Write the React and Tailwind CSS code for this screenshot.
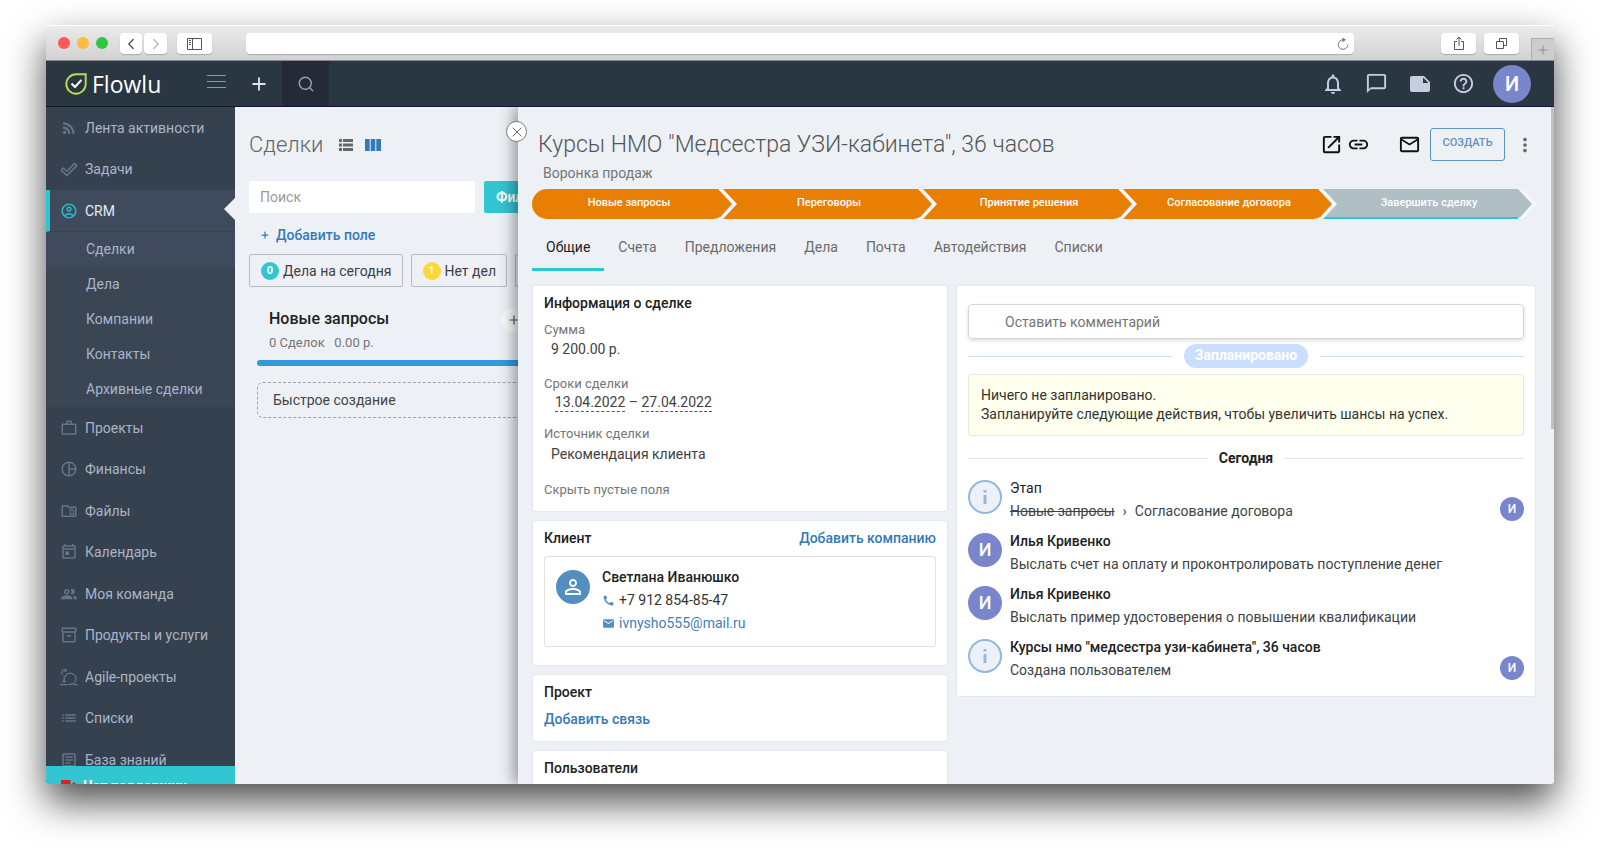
import {
  MdRssFeed,
  MdOutlineAccountCircle,
  MdWorkOutline,
  MdPieChartOutline,
  MdOutlineSnippetFolder,
  MdOutlineToday,
  MdOutlineInventory2,
  MdList,
  MdOutlineArticle,
  MdNotificationsNone,
  MdOutlineChatBubbleOutline,
  MdNote,
  MdHelpOutline,
  MdOpenInNew,
  MdLink,
  MdMailOutline,
  MdMoreVert,
  MdCall,
  MdEmail,
  MdPersonOutline,
} from 'react-icons/md';
import { ChevronLeft, ChevronRight, Plus, Search, X } from 'lucide-react';
import { clsx } from 'clsx';

const DoubleCheckIcon = ({ className }) => (
  <svg viewBox="0 0 18 18" className={className} fill="none" stroke="currentColor" strokeWidth="1.5" strokeLinejoin="round">
    <path d="M1.2 10.2 L3.4 8 L6.8 11.2 L14.6 3.4 L16.8 5.6 L6.8 15.6 Z" />
  </svg>
);

const TeamIcon = ({ className }) => (
  <svg viewBox="0 0 24 24" className={className} fill="none" stroke="currentColor" strokeWidth="2">
    <circle cx="9" cy="9" r="2.7" />
    <path d="M14.5 5.5a3.7 3.7 0 1 1 0 6.6q1.6-3.2 0-6.6Z" fill="currentColor" stroke="none" />
    <path d="M1.5 19v-1.5c0-2.6 5-4 7.5-4s7.5 1.4 7.5 4V19Z" fill="currentColor" stroke="none" />
    <path d="M17 13.8c2.6.5 5.5 1.8 5.5 3.7V19H18.5v-1.6c0-1.5-.6-2.7-1.5-3.6Z" fill="currentColor" stroke="none" />
  </svg>
);

const AgileIcon = ({ className }) => (
  <svg viewBox="0 0 18 18" className={className} fill="none" stroke="currentColor" strokeWidth="1.3">
    <path d="M0 16.6h7.5M13.5 16.6h4.5" />
    <path d="M8 16.4h2.2a5.6 5.6 0 1 0-5.2-7.4" />
    <path d="M4.2 8v6.2M2.8 12.7l1.4 1.6 1.4-1.6" />
    <path d="M2.6 6.4A2.4 2.4 0 0 1 3.2 2.2H6M4.8 0.7L6.4 2.3L4.8 3.9" />
  </svg>
);

const menuItems = [
  { icon: MdWorkOutline, label: 'Проекты' },
  { icon: MdPieChartOutline, label: 'Финансы' },
  { icon: MdOutlineSnippetFolder, label: 'Файлы' },
  { icon: MdOutlineToday, label: 'Календарь' },
  { icon: TeamIcon, label: 'Моя команда' },
  { icon: MdOutlineInventory2, label: 'Продукты и услуги' },
  { icon: AgileIcon, label: 'Agile-проекты' },
  { icon: MdList, label: 'Списки' },
  { icon: MdOutlineArticle, label: 'База знаний' },
];

const crmItems = ['Сделки', 'Дела', 'Компании', 'Контакты', 'Архивные сделки'];

const stages = [
  { label: 'Новые запросы', done: true },
  { label: 'Переговоры', done: true },
  { label: 'Принятие решения', done: true },
  { label: 'Согласование договора', done: true },
  { label: 'Завершить сделку', done: false },
];

const tabs = ['Общие', 'Счета', 'Предложения', 'Дела', 'Почта', 'Автодействия', 'Списки'];

function BrowserBar() {
  const button = 'flex h-[21px] items-center justify-center rounded bg-white text-[#555] shadow-[0_1px_1px_rgba(0,0,0,0.2)]';
  return (
    <div className="flex h-9 shrink-0 items-start rounded-t border-t border-white border-b border-b-[#8a8a8a] bg-linear-to-b from-[#ebebeb] to-[#d2d2d2] pt-[7px] pl-3">
      <div className="flex h-5 items-center gap-[7px]">
        <span className="size-3 rounded-full bg-[#fc5b57]" />
        <span className="size-3 rounded-full bg-[#fdbc40]" />
        <span className="size-3 rounded-full bg-[#2fc840]" />
      </div>
      <button aria-label="Назад" className={clsx(button, 'ml-3 w-[22px]')}>
        <ChevronLeft className="size-[18px]" strokeWidth={1.8} />
      </button>
      <button aria-label="Вперёд" className={clsx(button, 'ml-0.5 w-[23px]')}>
        <ChevronRight className="size-[18px] text-[#bbb]" strokeWidth={1.8} />
      </button>
      <button aria-label="Боковая панель" className={clsx(button, 'ml-2.5 w-[35px]')}>
        <svg viewBox="0 0 15 12" className="h-3 w-[15px]" fill="none" stroke="currentColor">
          <path d="M0.5 0.5h14v11h-14zM5.5 0.5v11M2 2.5h2M2 4.5h2M2 6.5h2" />
        </svg>
      </button>
      <div className="ml-[34px] flex h-[21px] flex-1 items-center rounded bg-white pr-1 shadow-[0_1px_1px_rgba(0,0,0,0.2)]">
        <input aria-label="Адрес" className="h-full min-w-0 flex-1 bg-transparent px-2 text-xs outline-none" />
        <button aria-label="Обновить" className="text-[#777]">
          <svg viewBox="0 0 14 14" className="size-3.5" fill="none" stroke="currentColor" strokeWidth="1">
            <path d="M7 2.8A4.8 4.8 0 1 0 11.8 7.6" />
            <path d="M6.5 0.4 L10 2.8 L6.5 5.2Z" fill="currentColor" stroke="none" />
          </svg>
        </button>
      </div>
      <button aria-label="Поделиться" className={clsx(button, 'ml-[87px] w-[35px]')}>
        <svg viewBox="0 0 12 15" className="h-[15px] w-3" fill="none" stroke="currentColor">
          <path d="M4 5.5H1.5v8h9v-8H8M6 10V1M3.5 3.5 L6 1 L8.5 3.5" />
        </svg>
      </button>
      <button aria-label="Вкладки" className={clsx(button, 'ml-2 w-[35px]')}>
        <svg viewBox="0 0 13 13" className="size-[13px]" fill="none" stroke="currentColor">
          <path d="M1.5 4.5h7v7h-7zM4.5 4.5v-3h7v7h-3" />
        </svg>
      </button>
      <button aria-label="Новая вкладка" className="mt-[5px] ml-3 flex h-[22px] w-[23px] items-center justify-center border border-r-0 border-b-0 border-[#b0b0b0] bg-[#cdcdcd] text-[#888]">
        <Plus className="size-3.5" strokeWidth={1.5} />
      </button>
    </div>
  );
}

function Header() {
  return (
    <header className="flex h-[46px] shrink-0 items-center border-b border-[#0c1830] bg-[#2b3643] text-[#c5cde0]">
      <div className="flex w-[189px] items-center pl-[19px]">
        <svg viewBox="0 0 22 22" className="size-[22px]" fill="none">
          <path d="M11 1.3H20.7V11A9.7 9.7 0 1 1 11 1.3Z" stroke="#b4e04f" strokeWidth="1.9" />
          <path d="M6.5 10.5 L10 14 L16.5 6.8" stroke="#fff" strokeWidth="2" />
        </svg>
        <span className="ml-[5px] font-['Open_Sans',sans-serif] text-[23px] leading-6 font-medium text-white">Flowlu</span>
        <button aria-label="Меню" className="mb-1 ml-auto mr-[9px] flex flex-col gap-[5px]">
          <span className="h-px w-[19px] bg-[#8b95a5]" />
          <span className="h-px w-[19px] bg-[#8b95a5]" />
          <span className="h-px w-[19px] bg-[#8b95a5]" />
        </button>
      </div>
      <button aria-label="Добавить" className="flex h-full w-[47px] items-center justify-center text-[#dfe4ee]">
        <Plus className="size-5" strokeWidth={2.2} />
      </button>
      <button aria-label="Поиск" className="flex h-full w-[47px] items-center justify-center bg-[#242b36] text-[#98a0ae]">
        <Search className="size-[18px]" strokeWidth={1.9} />
      </button>
      <div className="ml-auto flex items-center gap-5">
        <button aria-label="Уведомления"><MdNotificationsNone className="size-6" /></button>
        <button aria-label="Чат"><MdOutlineChatBubbleOutline className="size-[23px]" /></button>
        <button aria-label="Заметки"><MdNote className="size-6" /></button>
        <button aria-label="Помощь"><MdHelpOutline className="size-[23px]" /></button>
      </div>
      <button className="mr-[23px] ml-[18px] flex size-[38px] items-center justify-center rounded-full bg-[#7986cb] text-xl font-medium text-white">И</button>
    </header>
  );
}

function MenuLink({ icon: Icon, label }) {
  return (
    <a href="#" className="flex items-center gap-[7px] pl-3.5 odd:h-[41px] even:h-[42px]">
      <Icon className="size-[18px] shrink-0 text-[#66748a]" />
      <span>{label}</span>
    </a>
  );
}

function Sidebar() {
  return (
    <aside className="relative w-[189px] shrink-0 overflow-hidden bg-[#36414f] text-sm text-[#a9b4c8]">
      <nav>
        <div>
          <MenuLink icon={MdRssFeed} label="Лента активности" />
          <MenuLink icon={DoubleCheckIcon} label="Задачи" />
        </div>
        <a href="#" className="relative flex h-[42px] items-center gap-[7px] border-b border-l-4 border-b-[#37424f] border-l-[#2bc6d4] bg-[#3f4b5c] pl-2.5 text-[#e6ebf3]">
          <MdOutlineAccountCircle className="size-[18px] text-[#2bb7c6]" />
          <span>CRM</span>
          <span className="absolute top-2 right-0 border-y-11 border-r-11 border-y-transparent border-r-[#edf1f6]" />
        </a>
        <div className="bg-[#3b4655]">
          {crmItems.map((item, i) => (
            <a key={item} href="#" className={clsx('flex h-[35px] items-center pb-0.5 pl-10', i === 0 && 'bg-[#3f4b5c]')}>
              {item}
            </a>
          ))}
        </div>
        <div>
          {menuItems.map((item) => (
            <MenuLink key={item.label} icon={item.icon} label={item.label} />
          ))}
        </div>
      </nav>
      <a href="#" className="absolute inset-x-0 bottom-0 flex h-[18px] items-start gap-2 overflow-hidden bg-[#32c5d2] pt-3 pl-[15px] text-sm font-bold text-white">
        <svg viewBox="0 0 14 14" className="mt-0.5 h-3.5 w-3.5 shrink-0" fill="#dd1f1f">
          <path d="M0 0h9.5v14H0zM10.5 4l3.5-2v10l-3.5-2z" />
        </svg>
        <span className="leading-4">Чат поддержки</span>
      </a>
    </aside>
  );
}

function DealsBoard() {
  const chip = 'flex h-[33px] shrink-0 items-center gap-1 rounded-xs border border-[#b0bec5] pr-2.5 pl-[11px] text-sm text-[#3c4043]';
  const badge = 'flex size-[18px] items-center justify-center rounded-full text-[11px] font-bold text-white';
  return (
    <main className="w-[283px] shrink-0 overflow-hidden pl-3.5">
      <div className="flex items-center pt-[22px]">
        <h1 className="text-[22px] leading-8 font-light text-[#666]">Сделки</h1>
        <button aria-label="Список" className="ml-4 text-[#666]">
          <svg viewBox="0 0 14 12" className="h-3 w-3.5" fill="currentColor">
            <path d="M0 0h3v3H0zM4 0h10v3H4zM0 4.5h3v3H0zM4 4.5h10v3H4zM0 9h3v3H0zM4 9h10v3H4z" />
          </svg>
        </button>
        <button aria-label="Доска" className="ml-3 text-[#337ab7]">
          <svg viewBox="0 0 16 12" className="h-3 w-4" fill="currentColor">
            <path d="M0 0h4.7v12H0zM5.7 0h4.6v12H5.7zM11.3 0H16v12h-4.7z" />
          </svg>
        </button>
      </div>
      <div className="mt-5 flex gap-[9px]">
        <input placeholder="Поиск" aria-label="Поиск" className="h-8 w-[226px] shrink-0 rounded-xs bg-white px-[11px] text-sm outline-none placeholder:text-[#999]" />
        <button className="h-8 shrink-0 rounded-xs bg-[#32c5d2] px-3 text-sm font-bold text-white">Фильтр</button>
      </div>
      <button className="mt-3 ml-[11px] flex h-5 items-center gap-1.5 text-sm font-medium text-[#337ab7]">
        <Plus className="size-2.5" strokeWidth={3} /> Добавить поле
      </button>
      <div className="mt-[9px] flex gap-2">
        <button className={chip}><span className={clsx(badge, 'bg-[#32c5d2]')}>0</span>Дела на сегодня</button>
        <button className={chip}><span className={clsx(badge, 'bg-[#fdd835]')}>1</span>Нет дел</button>
        <button className={chip}><span className={clsx(badge, 'bg-[#e35b5a]')}>0</span>Просрочено</button>
      </div>
      <section className="mt-5 w-[320px] pl-2">
        <div className="flex items-start pl-3">
          <div>
            <h2 className="text-base leading-6 font-medium text-[#212121]">Новые запросы</h2>
            <p className="text-[13px] leading-6 text-[#757575]">0 Сделок &nbsp; 0.00 р.</p>
          </div>
          <button aria-label="Добавить сделку" className="mt-px ml-auto mr-[43px] flex size-6 items-center justify-center rounded-full bg-[#f9f9f9] text-[#555]">
            <Plus className="size-3.5" />
          </button>
        </div>
        <div className="mt-[5px] h-1.5 rounded-full bg-[#3498db]" />
        <button className="mt-4 block h-9 w-full rounded-md border border-dashed border-[#9aa6ae] px-[15px] text-left text-sm text-[#444]">
          Быстрое создание
        </button>
      </section>
    </main>
  );
}

function Stage({ label, done, first }) {
  return (
    <button
      className={clsx(
        'relative flex h-[30px] items-center justify-center pb-0.5 text-[11px] font-medium text-white',
        first ? 'flex-[19] rounded-l-full' : 'flex-[20]',
        done ? 'bg-[#e87e04]' : 'bg-[#b0bec5] shadow-[inset_0_-2px_#2bc6d4]'
      )}
    >
      <span className={first ? 'pl-1' : 'pl-3.5'}>{label}</span>
      <svg viewBox="0 0 26 30" className="absolute top-0 -right-4 z-10 h-[30px] w-[26px]">
        <path d="M0 0H11L25 15L11 30H0Z" fill="#f3f6fb" />
        <path d="M0 0H6L20 15L9 27.3Q6 30 2 30H0Z" fill={done ? '#e87e04' : '#b0bec5'} />
        {!done && <path d="M0 29H6" stroke="#2bc6d4" strokeWidth="2" />}
      </svg>
    </button>
  );
}

function Card({ title, action, className, children }) {
  return (
    <section className={clsx('rounded-[3px] border border-[#e4e8ee] bg-white px-[11px]', className)}>
      <div className="flex items-center justify-between pt-[7px] text-sm leading-5">
        <h2 className="font-medium text-[#212121]">{title}</h2>
        {action}
      </div>
      {children}
    </section>
  );
}

function DealInfo() {
  return (
    <Card title="Информация о сделке" className="pb-[10px]">
      <dl className="mt-[7px] text-sm text-[#424242]">
        <dt className="text-[13px] leading-5 text-[#757575]">Сумма</dt>
        <dd className="pl-[7px] leading-[19px]">9 200.00 р.</dd>
        <dt className="mt-[15px] text-[13px] leading-5 text-[#757575]">Сроки сделки</dt>
        <dd className="pl-[11px] leading-[17px]">
          <button className="border-b border-dashed border-[#555]">13.04.2022</button> –{' '}
          <button className="border-b border-dashed border-[#555]">27.04.2022</button>
        </dd>
        <dt className="mt-3 text-[13px] leading-5 text-[#757575]">Источник сделки</dt>
        <dd className="pl-[7px] leading-5">Рекомендация клиента</dd>
      </dl>
      <button className="mt-4 text-[13px] leading-5 text-[#757575]">Скрыть пустые поля</button>
    </Card>
  );
}

function Client() {
  return (
    <Card
      title="Клиент"
      action={<a href="#" className="font-medium text-[#337ab7]">Добавить компанию</a>}
      className="pb-[18px]"
    >
      <div className="mt-2 flex gap-3 rounded-[3px] border border-[#e0e0e0] px-[11px] pt-[9px] pb-[11px] text-sm">
        <span className="mt-1 flex size-[34px] items-center justify-center rounded-full bg-[#548dc0] text-white">
          <MdPersonOutline className="size-6" />
        </span>
        <div className="leading-[23px]">
          <p className="font-medium text-[#212121]">Светлана Иванюшко</p>
          <p className="flex items-center gap-1 text-[#333]">
            <MdCall className="size-[13px] text-[#548dc0]" /> +7 912 854-85-47
          </p>
          <a href="mailto:ivnysho555@mail.ru" className="flex items-center gap-1 text-[#3f7fb8]">
            <MdEmail className="size-[13px] text-[#548dc0]" /> ivnysho555@mail.ru
          </a>
        </div>
      </div>
    </Card>
  );
}

function TimelineItem({ title, info, author, children }) {
  return (
    <li className="flex items-start gap-2">
      {info ? (
        <span className="flex size-[34px] items-center justify-center rounded-full border-2 border-[#92b9dc] bg-[#edf1f7]">
          <svg viewBox="0 0 4 16" className="h-4 w-1" fill="#92b9dc">
            <path d="M0.5 1h3v2.5h-3zM0.5 6h3v9h-3z" />
          </svg>
        </span>
      ) : (
        <span className="flex size-[34px] items-center justify-center rounded-full bg-[#7986cb] text-lg font-medium text-white">И</span>
      )}
      <div className="flex-1 pb-[9px] text-sm text-[#424242]">
        <h3 className="leading-[17px] font-medium text-[#212121]">{title}</h3>
        <p className="mt-[3px] leading-[23px]">{children}</p>
      </div>
      {author && (
        <span className="mt-[17px] flex size-6 items-center justify-center rounded-full bg-[#7986cb] text-xs font-medium text-white">И</span>
      )}
    </li>
  );
}

function Timeline() {
  return (
    <section className="rounded-[3px] border border-[#e4e8ee] bg-white px-[11px] pt-[18px] pb-[5px]">
      <input
        placeholder="Оставить комментарий"
        aria-label="Оставить комментарий"
        className="h-[35px] w-full rounded border border-[#d5d5d5] px-9 text-sm shadow-[0_2px_4px_rgba(0,0,0,0.12)] outline-none placeholder:text-[#757575]"
      />
      <div className="mt-[5px] flex items-center gap-3">
        <span className="h-px flex-1 bg-[#cfe2f3]" />
        <span className="h-6 rounded-full bg-[#c9dffd] px-[11px] text-sm leading-[22px] font-bold text-white">Запланировано</span>
        <span className="h-px flex-1 bg-[#cfe2f3]" />
      </div>
      <p className="mt-[6px] rounded-[3px] border border-[#e6e8d8] bg-[#feffec] px-3 py-[11px] text-sm leading-[19px] text-[#333]">
        Ничего не запланировано.
        <br />
        Запланируйте следующие действия, чтобы увеличить шансы на успех.
      </p>
      <div className="mt-3 flex items-center gap-[11px]">
        <span className="h-px flex-1 bg-[#e5e5e5]" />
        <h2 className="text-sm leading-5 font-bold text-[#212121]">Сегодня</h2>
        <span className="h-px flex-1 bg-[#e5e5e5]" />
      </div>
      <ul className="mt-3 flex flex-col gap-px">
        <TimelineItem title={<span className="font-normal">Этап</span>} info author>
          <s>Новые запросы</s>
          <span className="px-2">›</span>
          Согласование договора
        </TimelineItem>
        <TimelineItem title="Илья Кривенко">Выслать счет на оплату и проконтролировать поступление денег</TimelineItem>
        <TimelineItem title="Илья Кривенко">Выслать пример удостоверения о повышении квалификации</TimelineItem>
        <TimelineItem title={'Курсы нмо "медсестра узи-кабинета", 36 часов'} info author>
          Создана пользователем
        </TimelineItem>
      </ul>
    </section>
  );
}

function DealDrawer() {
  return (
    <div className="relative flex-1 bg-[#edf1f6] pr-[18px] pl-3.5 shadow-[-4px_0_14px_rgba(0,0,0,0.4)]">
      <button aria-label="Закрыть" className="absolute top-3.5 -left-3 z-10 flex size-[21px] items-center justify-center rounded-full border border-[#777] bg-white text-[#666]">
        <X className="size-4" strokeWidth={1.5} />
      </button>
      <span className="absolute top-0 right-0 h-[322px] w-[3px] bg-[#c1c1c1]" />

      <div className="flex items-center pt-[21px] pl-1.5">
        <h1 className="text-[23px] leading-8 font-light text-[#555]">Курсы НМО "Медсестра УЗИ-кабинета", 36 часов</h1>
        <div className="ml-auto flex items-center text-[#111]">
          <button aria-label="Открыть"><MdOpenInNew className="size-[23px]" /></button>
          <button aria-label="Ссылка" className="ml-1"><MdLink className="size-[23px]" /></button>
          <button aria-label="Письмо" className="ml-7"><MdMailOutline className="size-[23px]" /></button>
          <button className="ml-[9px] h-[33px] w-[75px] rounded-[3px] border border-[#5b93c4] pb-0.5 text-[11px] font-medium text-[#5b93c4]">СОЗДАТЬ</button>
          <button aria-label="Ещё" className="ml-[9px] text-[#666]"><MdMoreVert className="size-[22px]" /></button>
        </div>
      </div>
      <p className="pl-[11px] text-sm leading-6 text-[#757575]">Воронка продаж</p>

      <div className="mt-1 mr-3.5 flex">
        {stages.map((stage, i) => (
          <Stage key={stage.label} label={stage.label} done={stage.done} first={i === 0} />
        ))}
      </div>

      <div role="tablist" className="mt-2.5 flex">
        {tabs.map((tab, i) => (
          <button
            key={tab}
            role="tab"
            aria-selected={i === 0}
            className={clsx(
              'h-[42px] border-b-3 px-3.5 pb-1 text-sm',
              i === 0 ? 'border-[#2bc6d4] text-[#212121]' : 'border-transparent text-[#6b6b6b]'
            )}
          >
            {tab}
          </button>
        ))}
      </div>

      <div className="mt-3.5 flex items-start gap-2">
        <div className="flex flex-[416] flex-col gap-2">
          <DealInfo />
          <Client />
          <Card title="Проект" className="pb-3">
            <a href="#" className="mt-[7px] block text-sm leading-5 font-medium text-[#337ab7]">Добавить связь</a>
          </Card>
          <Card title="Пользователи" className="pb-10" />
        </div>
        <div className="flex-[580]">
          <Timeline />
        </div>
      </div>
    </div>
  );
}

export default function App() {
  return (
    <div className="flex h-screen bg-white px-[46px] pt-[25px] pb-[67px] font-[Roboto,sans-serif]">
      <div className="flex flex-1 flex-col overflow-hidden rounded shadow-[0_18px_38px_rgba(0,0,0,0.7)]">
        <BrowserBar />
        <Header />
        <div className="flex min-h-0 flex-1 overflow-hidden bg-[#edf1f6]">
          <Sidebar />
          <DealsBoard />
          <DealDrawer />
        </div>
      </div>
    </div>
  );
}
